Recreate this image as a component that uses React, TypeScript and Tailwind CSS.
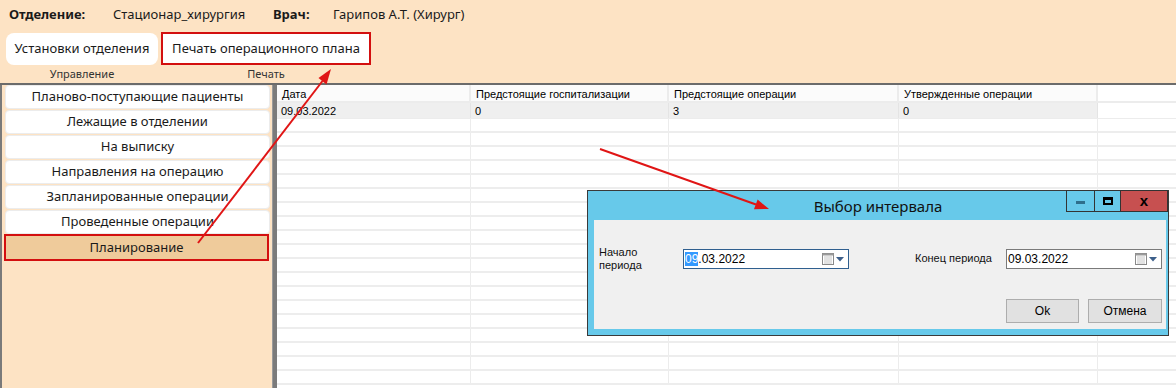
const navItems = [
  'Планово-поступающие пациенты',
  'Лежащие в отделении',
  'На выписку',
  'Направления на операцию',
  'Запланированные операции',
  'Проведенные операции',
];

const columns = [
  { title: 'Дата', w: 'w-[194px]' },
  { title: 'Предстоящие госпитализации', w: 'w-[198px]' },
  { title: 'Предстоящие операции', w: 'w-[230px]' },
  { title: 'Утвержденные операции', w: 'w-[199px]' },
];

const dataRow = ['09.03.2022', '0', '3', '0'];

const CalendarIcon = () => (
  <div className="flex items-center gap-[2px]">
    <svg width="12" height="12" viewBox="0 0 12 12">
      <rect x="0.5" y="0.5" width="11" height="11" fill="#fff" stroke="#8a8a8a" />
      <rect x="0.5" y="0.5" width="11" height="2" fill="#9a9a9a" />
      {[3, 5, 7, 9].map((x) =>
        [4, 6, 8, 10].map((y) => <rect key={`${x}-${y}`} x={x - 0.5} y={y - 0.5} width="1" height="1" fill="#8a8a8a" />)
      )}
    </svg>
    <svg width="8" height="5" viewBox="0 0 8 5">
      <polygon points="0,0 8,0 4,4.5" fill="#3d5f8a" />
    </svg>
  </div>
);

const DateInput = ({ focused, w }: { focused?: boolean; w: string }) => (
  <div
    className={`${w} h-[20px] bg-white flex items-center justify-between pl-[1px] pr-[4px] border ${
      focused ? 'border-[#2f5f8f]' : 'border-[#7a7a7a]'
    }`}
  >
    <span className="text-[12px] text-black leading-none">
      {focused ? <span className="bg-[#3399ff] text-white">09</span> : '09'}
      .03.2022
    </span>
    <CalendarIcon />
  </div>
);

const IntervalDialog = () => (
  <div className="absolute left-[587px] top-[190px] w-[582px] h-[146px] bg-[#67c9ea] border border-[#3a3a3a] flex flex-col font-['Liberation_Sans',sans-serif]">
    <div className="h-[29px] relative flex items-center justify-center">
      <span className="text-[15px] text-[#111] font-['Noto_Sans',sans-serif] mt-[2px]">Выбор интервала</span>
      <div className="absolute right-0 top-[-1px] flex h-[22px] border border-[#333] border-r-0">
        <div className="w-[28px] flex items-center justify-center border-r border-[#333]">
          <div className="w-[9px] h-[3px] bg-[#2e6f8c] mt-[3px]" />
        </div>
        <div className="w-[26px] flex items-center justify-center border-r border-[#333]">
          <div className="w-[10px] h-[8px] border-2 border-black border-t-[3px]" />
        </div>
        <div className="w-[47px] bg-[#c75050] flex items-center justify-center border-r border-[#333]">
          <span className="text-[15px] font-bold text-black leading-none mb-[2px]">x</span>
        </div>
      </div>
    </div>
    <div className="flex-1 ml-[6px] mr-[2px] mb-[6px] bg-[#f0f0f0] relative">
      <div className="absolute left-[5px] top-[26px] text-[11px] leading-[13px] text-[#111]">
        Начало
        <br />
        периода
      </div>
      <div className="absolute left-[89px] top-[29px]">
        <DateInput focused w="w-[166px]" />
      </div>
      <div className="absolute left-[321px] top-[33px] text-[11px] text-[#111] leading-none">Конец периода</div>
      <div className="absolute left-[412px] top-[29px]">
        <DateInput w="w-[156px]" />
      </div>
      <div className="absolute left-[412px] top-[79px] flex gap-[9px]">
        <button className="w-[73px] h-[24px] bg-[#e1e1e1] border border-[#adadad] text-[12px] text-black">Ok</button>
        <button className="w-[74px] h-[24px] bg-[#e1e1e1] border border-[#adadad] text-[12px] text-black">Отмена</button>
      </div>
    </div>
  </div>
);

const Arrows = () => (
  <svg className="absolute inset-0 pointer-events-none" width="1176" height="388" viewBox="0 0 1176 388">
    <line x1="198" y1="243" x2="322.5" y2="81" stroke="#e01515" strokeWidth="2" />
    <polygon points="331,69 326.5,84.5 318.5,78" fill="#e01515" />
    <line x1="600" y1="149" x2="756" y2="204.5" stroke="#e01515" strokeWidth="2" />
    <polygon points="769,209 754,209.2 757.6,199.6" fill="#e01515" />
  </svg>
);

export default function App() {
  return (
    <div className="relative w-[1176px] h-[388px] overflow-hidden bg-[#fde3c4] font-['Noto_Sans',sans-serif] text-[#1a1a1a]">
      {/* header */}
      <div className="h-[83px] flex flex-col">
        <div className="flex items-center h-[30px] pl-[9px] text-[13px]">
          <span className="w-[104px] font-bold">Отделение:</span>
          <span className="w-[160px]">Стационар_хирургия</span>
          <span className="w-[60px] font-bold">Врач:</span>
          <span>Гарипов А.Т. (Хирург)</span>
        </div>
        <div className="flex items-start pl-[6px] gap-[3px] mt-[2px]">
          <div className="flex flex-col items-center">
            <div className="w-[152px] h-[32px] bg-white rounded-lg flex items-center justify-center text-[13px] mt-[1px]">
              Установки отделения
            </div>
            <span className="text-[11px] text-[#333] mt-[1px]">Управление</span>
          </div>
          <div className="flex flex-col items-center">
            <div className="w-[210px] h-[33px] bg-white border-2 border-[#d30f0f] flex items-center justify-center text-[13px]">
              Печать операционного плана
            </div>
            <span className="text-[11px] text-[#333] mt-[1px]">Печать</span>
          </div>
        </div>
      </div>
      <div className="h-[2px] bg-[#6b6b6b]" />

      {/* body */}
      <div className="flex h-[303px]">
        <div className="w-[272px] border-l-2 border-[#7a7a7a] pl-[3px] pr-[2px] flex flex-col gap-[1px]">
          {navItems.map((item) => (
            <div
              key={item}
              className="h-[24px] w-[265px] bg-white rounded-[4px] border border-[#ececec] flex items-center justify-center text-[13px]"
            >
              {item}
            </div>
          ))}
          <div className="h-[27px] w-[265px] -ml-[1px] -mt-[1px] bg-[#efcb9b] border-2 border-[#d30f0f] flex items-center justify-center text-[13px]">
            Планирование
          </div>
        </div>
        <div className="w-[5px] bg-[#7b7b7b] border-l border-[#9a9a9a]" />
        <div className="flex-1 bg-white font-['Liberation_Sans',sans-serif] text-[11px] text-black">
          <div className="flex h-[18px] border-b-2 border-[#ececec]">
            {columns.map((c) => (
              <div key={c.title} className={`${c.w} border-r-2 border-[#ececec] pl-[5px] leading-[18px] bg-[#fbfbfb]`}>
                {c.title}
              </div>
            ))}
            <div className="flex-1" />
          </div>
          <div className="flex h-[16px] border-b border-[#ececec]">
            {columns.map((c, i) => (
              <div key={c.title} className={`${c.w} border-r border-[#e4e4e4] pl-[4px] leading-[17px] bg-[#efefef]`}>
                {dataRow[i]}
              </div>
            ))}
            <div className="flex-1" />
          </div>
          {Array.from({ length: 19 }).map((_, r) => (
            <div key={r} className="flex h-[14px] border-b-2 border-[#ededed]">
              {columns.map((c) => (
                <div key={c.title} className={`${c.w} border-r border-[#ececec]`} />
              ))}
              <div className="flex-1" />
            </div>
          ))}
        </div>
      </div>

      <IntervalDialog />
      <Arrows />
    </div>
  );
}
